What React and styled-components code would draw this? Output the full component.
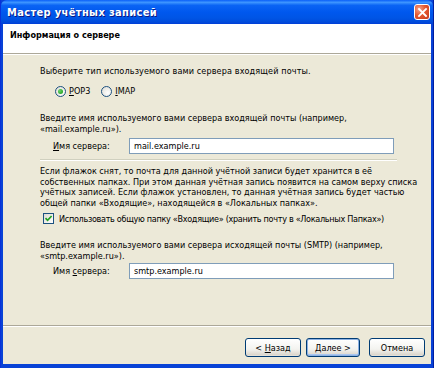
import React from "react";
import styled, { createGlobalStyle } from "styled-components";

const GlobalStyle = createGlobalStyle`
  html, body {
    margin: 0;
    padding: 0;
    background: #ffffff;
  }
  body {
    font-family: "DejaVu Sans Condensed", "DejaVu Sans", Tahoma, sans-serif;
    font-size: 9px;
    color: #000;
  }
`;

const App = () => {
  return (
    <>
      <GlobalStyle />
      <Window>
        <TitleBar>
          <TitleText>Мастер учётных записей</TitleText>
          <CloseButton>
            <svg width="11" height="11" viewBox="0 0 11 11">
              <path
                d="M2 2 L9 9 M9 2 L2 9"
                stroke="#fff"
                strokeWidth="1.8"
                strokeLinecap="square"
              />
            </svg>
          </CloseButton>
        </TitleBar>
        <Client>
          <Header>
            <HeaderTitle>Информация о сервере</HeaderTitle>
          </Header>
          <Body>
            <Text $mt={10.5} $ls={0.12}>
              Выберите тип используемого вами сервера входящей почты.
            </Text>
            <RadioRow>
              <Option>
                <Radio $checked />
                <span>
                  <u>P</u>OP3
                </span>
              </Option>
              <Option>
                <Radio />
                <span>
                  <u>I</u>MAP
                </span>
              </Option>
            </RadioRow>
            <Text $mt={15}>
              Введите имя используемого вами сервера входящей почты (например,
              <br />
              «mail.example.ru»).
            </Text>
            <FieldRow $mt={3.5}>
              <FieldLabel>
                <u>И</u>мя сервера:
              </FieldLabel>
              <Input defaultValue="mail.example.ru" />
            </FieldRow>
            <Separator $mt={5} />
            <Paragraph>
              Если флажок снят, то почта для данной учётной записи будет
              хранится в её
              <br />
              собственных папках. При этом данная учётная запись появится на
              самом верху списка
              <br />
              учётных записей. Если флажок установлен, то данная учётная запись
              будет частью
              <br />
              общей папки «Входящие», находящейся в «Локальных папках».
            </Paragraph>
            <CheckRow>
              <CheckBox>
                <svg width="9" height="9" viewBox="0 0 9 9">
                  <path
                    d="M1.5 4.2 L3.6 6.3 L7.6 2"
                    fill="none"
                    stroke="#21a121"
                    strokeWidth="1.7"
                  />
                </svg>
              </CheckBox>
              <CheckLabel>
                Использовать общую папку «Входящие» (хранить почту в «Локальных
                Папках»)
              </CheckLabel>
            </CheckRow>
            <Text $mt={14.75}>
              Введите имя используемого вами сервера исходящей почты (SMTP)
              (например,
              <br />
              «smtp.example.ru»).
            </Text>
            <FieldRow $mt={1.5}>
              <FieldLabel>
                Имя <u>с</u>ервера:
              </FieldLabel>
              <Input defaultValue="smtp.example.ru" />
            </FieldRow>
          </Body>
          <Footer>
            <FooterLine />
            <ButtonRow>
              <Button $w={56}>
                <span>
                  &lt; <u>Н</u>азад
                </span>
              </Button>
              <Button $w={54} $default>
                <span>
                  <u>Д</u>алее &gt;
                </span>
              </Button>
              <Button $w={56} $gap={9}>
                <span>Отмена</span>
              </Button>
            </ButtonRow>
          </Footer>
        </Client>
      </Window>
    </>
  );
};

export default App;

const Window = styled.div`
  width: 434px;
  height: 368px;
  display: flex;
  flex-direction: column;
  box-sizing: border-box;
  background: #0842d6;
  border-left: 1px solid #0831d9;
  border-right: 1px solid #001ea0;
`;

const TitleBar = styled.div`
  height: 24px;
  flex: none;
  display: flex;
  align-items: center;
  justify-content: space-between;
  padding: 0 3px 0 6px;
  background: linear-gradient(
    to bottom,
    #0a5ff8 0%,
    #3d95ff 10%,
    #0a64f4 22%,
    #0058ee 50%,
    #0055e5 75%,
    #004ada 92%,
    #003dd7 100%
  );
  border-radius: 6px 6px 0 0;
`;

const TitleText = styled.div`
  font-family: "DejaVu Sans Condensed", "DejaVu Sans", sans-serif;
  font-weight: bold;
  font-size: 11px;
  color: #fff;
  text-shadow: 1px 1px 0 #0a1883;
  letter-spacing: 0.35px;
`;

const CloseButton = styled.div`
  width: 16px;
  height: 16px;
  box-sizing: border-box;
  border: 1px solid #fff;
  border-radius: 3px;
  display: flex;
  align-items: center;
  justify-content: center;
  background: radial-gradient(
    circle at 30% 30%,
    #f5a38a 0%,
    #e4582f 45%,
    #c5381a 100%
  );
`;

const Client = styled.div`
  flex: 1;
  display: flex;
  flex-direction: column;
  margin: 0 2px 4px 2px;
  background: #ece9d8;
`;

const Header = styled.div`
  height: 30px;
  flex: none;
  background: #fff;
  border-bottom: 1px solid #aca899;
  box-shadow: 0 1px 0 #fff;
  padding: 6px 0 0 7px;
  box-sizing: border-box;
`;

const HeaderTitle = styled.div`
  font-weight: bold;
  font-size: 9px;
  line-height: 11px;
`;

const Body = styled.div`
  flex: 1;
  display: flex;
  flex-direction: column;
  padding: 1px 34px 0 37px;
`;

const Text = styled.div`
  margin-top: ${(p) => p.$mt || 0}px;
  line-height: 11px;
  white-space: nowrap;
  letter-spacing: ${(p) => p.$ls || 0}px;
`;

const Paragraph = styled.div`
  margin-top: 5px;
  line-height: 10.5px;
  white-space: nowrap;
`;

const RadioRow = styled.div`
  display: flex;
  align-items: center;
  gap: 11px;
  margin-top: 8px;
  padding-left: 15px;
  height: 13px;
`;

const Option = styled.label`
  display: flex;
  align-items: center;
  gap: 3px;
`;

const Radio = styled.span`
  width: 11px;
  height: 11px;
  box-sizing: border-box;
  border-radius: 50%;
  border: 1px solid #1c5180;
  background: radial-gradient(circle at 65% 65%, #ffffff 0%, #dcdad1 100%);
  display: flex;
  align-items: center;
  justify-content: center;

  &::after {
    content: "";
    width: 5px;
    height: 5px;
    border-radius: 50%;
    background: radial-gradient(circle at 35% 35%, #6ad46a 0%, #21a121 80%);
    display: ${(p) => (p.$checked ? "block" : "none")};
  }
`;

const FieldRow = styled.div`
  margin-top: ${(p) => p.$mt || 0}px;
  display: flex;
  align-items: center;
  padding-left: 13px;
`;

const FieldLabel = styled.div`
  width: 76px;
  flex: none;
`;

const Input = styled.input`
  width: 265px;
  height: 16px;
  box-sizing: border-box;
  border: 1px solid #7f9db9;
  background: #fff;
  padding: 0 4px;
  font-family: "DejaVu Sans Condensed", "DejaVu Sans", sans-serif;
  font-size: 9px;
  color: #000;
  outline: none;
`;

const Separator = styled.div`
  margin-top: ${(p) => p.$mt || 0}px;
  width: 357px;
  height: 1px;
  background: #d0d0bf;
  border-bottom: 1px solid #fff;
`;

const CheckRow = styled.div`
  display: flex;
  align-items: center;
  gap: 5px;
  margin-top: 4px;
  padding-left: 3px;
  height: 13px;
  white-space: nowrap;
`;

const CheckLabel = styled.span`
  letter-spacing: -0.3px;
`;

const CheckBox = styled.span`
  width: 11px;
  height: 11px;
  box-sizing: border-box;
  border: 1px solid #1c5180;
  background: linear-gradient(135deg, #dcdad1 0%, #ffffff 100%);
  display: flex;
  align-items: center;
  justify-content: center;
`;

const Footer = styled.div`
  flex: none;
  display: flex;
  flex-direction: column;
`;

const FooterLine = styled.div`
  height: 1px;
  background: #aca899;
  border-bottom: 1px solid #fff;
`;

const ButtonRow = styled.div`
  display: flex;
  justify-content: flex-end;
  padding: 11px 6px 7px 0;
`;

const Button = styled.div`
  width: ${(p) => p.$w}px;
  height: 19px;
  margin-left: ${(p) => (p.$gap ? p.$gap : 5)}px;
  box-sizing: border-box;
  border: 1px solid #003c74;
  border-radius: 3px;
  display: flex;
  align-items: center;
  justify-content: center;
  font-size: 9px;
  white-space: pre;
  background: linear-gradient(to bottom, #ffffff 0%, #f3f3ef 60%, #d6d0c5 100%);
  box-shadow: ${(p) =>
    p.$default
      ? "inset 0 0 0 1px #8db2e3, inset 0 -1px 0 1px #a9c6f0"
      : "inset 0 -1px 0 #e3e0d7"};
`;
